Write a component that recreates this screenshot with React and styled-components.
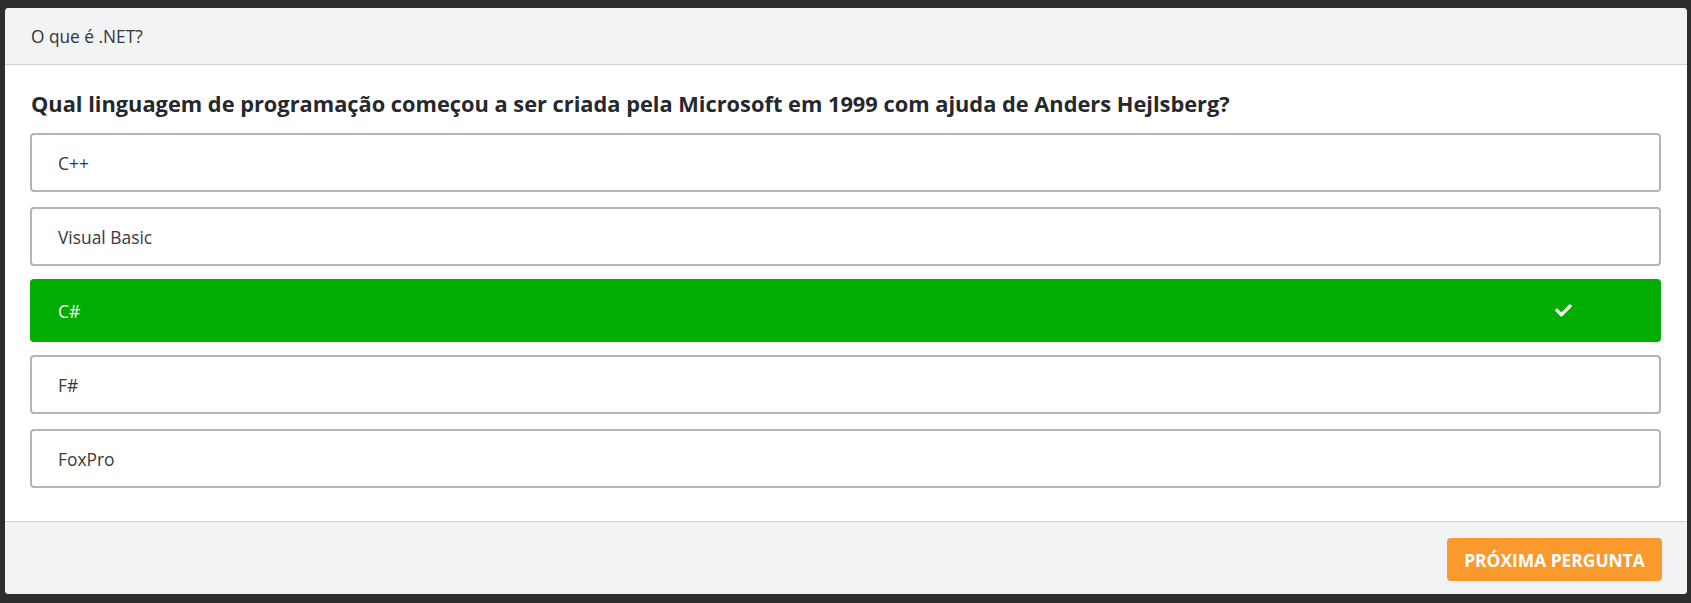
import React, { useState } from 'react'
import styled, { createGlobalStyle } from 'styled-components'
import { FaCheck } from 'react-icons/fa'

const GlobalStyle = createGlobalStyle`
    html, body {
        margin: 0;
        padding: 0;
        background: #2d2d2d;
        font-family: "Open Sans", "Liberation Sans", sans-serif;
    }
    * { box-sizing: border-box; }
`

const options = ["C++", "Visual Basic", "C#", "F#", "FoxPro"]

function App() {
    const [selected, setSelected] = useState(2)
    return (
        <>
            <GlobalStyle />
            <Backdrop>
                <Card>
                    <Header>O que é .NET?</Header>
                    <Body>
                        <Question>Qual linguagem de programação começou a ser criada pela Microsoft em 1999 com ajuda de Anders Hejlsberg?</Question>
                        <OptionList>
                            {options.map((opt, i) => (
                                <Option key={opt} $correct={i === selected} onClick={() => setSelected(i)}>
                                    <span>{opt}</span>
                                    {i === selected && <FaCheck size={17} />}
                                </Option>
                            ))}
                        </OptionList>
                    </Body>
                    <Footer>
                        <NextButton type="button">Próxima pergunta</NextButton>
                    </Footer>
                </Card>
            </Backdrop>
        </>
    )
}

const Backdrop = styled.div`
    padding: 8px 4px 8px 5px;
    height: 603px;
`

const Card = styled.div`
    background: #fff;
    border-radius: 4px;
    overflow: hidden;
    display: flex;
    flex-direction: column;
`

const Header = styled.div`
    height: 57px;
    display: flex;
    align-items: center;
    padding: 0 26px;
    background: #f2f3f5;
    border-bottom: 1px solid #ccd0d5;
    color: #333;
    font-size: 17.3px;
`

const Body = styled.div`
    padding: 24px 26px 33px 25px;
`

const Question = styled.h2`
    margin: 0 0 14px 1px;
    font-size: 21.8px;
    line-height: 30px;
    font-weight: 700;
    color: #25282c;
    white-space: nowrap;
`

const OptionList = styled.div`
    display: flex;
    flex-direction: column;
    gap: 15px;
`

const Option = styled.div`
    display: flex;
    align-items: center;
    justify-content: space-between;
    height: ${p => p.$correct ? '63px' : '59px'};
    margin: ${p => p.$correct ? '-2px 0' : '0'};
    padding: 0 87px 0 26px;
    border: 2px solid ${p => p.$correct ? '#00ad00' : '#adb5bd'};
    border-radius: 4px;
    background: ${p => p.$correct ? '#00ad00' : '#fff'};
    color: ${p => p.$correct ? '#fff' : '#3a3a3a'};
    font-size: 17.4px;
    cursor: pointer;
    svg {
        color: #fff;
    }
`

const Footer = styled.div`
    display: flex;
    justify-content: flex-end;
    padding: 16px 25px 13px;
    background: #f2f3f5;
    border-top: 1px solid #ccd0d5;
`

const NextButton = styled.button`
    height: 43px;
    width: 215px;
    border: none;
    border-radius: 4px;
    background: #fb9a2c;
    color: #fff;
    font-family: inherit;
    font-size: 17.4px;
    font-weight: 700;
    text-transform: uppercase;
    cursor: pointer;
`

export default App
